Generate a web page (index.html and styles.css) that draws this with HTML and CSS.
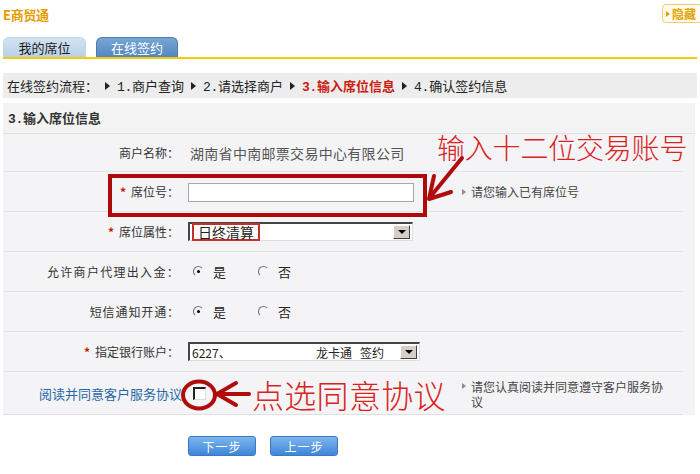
FILE: index.html
```html
<!DOCTYPE html>
<html lang="zh-CN">
<head>
<meta charset="utf-8">
<title>E商贸通 - 在线签约</title>
<link rel="stylesheet" href="styles.css">
</head>
<body>
<div class="page">
  <header class="top">
    <span class="brand">E商贸通</span>
    <a class="hide-btn"><span class="tri-gold"></span>隐藏</a>
  </header>

  <nav class="tabs">
    <span class="tab tab-light">我的席位</span>
    <span class="tab tab-active">在线签约</span>
  </nav>

  <div class="crumbs">
    <span>在线签约流程：</span>
    <span class="arr"></span><span><span class="num">1.</span>商户查询</span>
    <span class="arr"></span><span><span class="num">2.</span>请选择商户</span>
    <span class="arr"></span><span class="cur"><span class="num">3.</span>输入席位信息</span>
    <span class="arr"></span><span><span class="num">4.</span>确认签约信息</span>
  </div>

  <section class="panel">
    <h2 class="panel-title"><span class="num">3.</span>输入席位信息</h2>
    <div class="rows">
      <div class="row r-first">
        <div class="lab">商户名称：</div>
        <div class="val"><span class="company">湖南省中南邮票交易中心有限公司</span></div>
        <div class="hint"></div>
      </div>
      <div class="row">
        <div class="lab"><span class="star">*</span>席位号：</div>
        <div class="val"><span class="textbox"></span></div>
        <div class="hint"><span class="tri-gray"></span>请您输入已有席位号</div>
      </div>
      <div class="row">
        <div class="lab"><span class="star">*</span>席位属性：</div>
        <div class="val">
          <span class="select s-attr"><span class="sel-text boxed">日终清算</span><span class="drop"></span></span>
        </div>
        <div class="hint"></div>
      </div>
      <div class="row">
        <div class="lab wide">允许商户代理出入金：</div>
        <div class="val radios">
          <span class="radio on"></span><span class="opt">是</span>
          <span class="radio"></span><span class="opt">否</span>
        </div>
        <div class="hint"></div>
      </div>
      <div class="row">
        <div class="lab wide2">短信通知开通：</div>
        <div class="val radios">
          <span class="radio on"></span><span class="opt">是</span>
          <span class="radio"></span><span class="opt">否</span>
        </div>
        <div class="hint"></div>
      </div>
      <div class="row">
        <div class="lab"><span class="star">*</span>指定银行账户：</div>
        <div class="val">
          <span class="select s-bank"><span class="acct">6227、</span><span class="card">龙卡通&nbsp;&nbsp;&nbsp;签约</span><span class="drop"></span></span>
        </div>
        <div class="hint"></div>
      </div>
      <div class="row r-last">
        <div class="lab agree">阅读并同意客户服务协议</div>
        <div class="val"><span class="checkbox"></span></div>
        <div class="hint two"><span class="tri-gray"></span><span>请您认真阅读并同意遵守客户服务协议</span></div>
      </div>
    </div>
  </section>

  <div class="actions">
    <button class="btn">下一步</button>
    <button class="btn">上一步</button>
  </div>

  <div class="note note-1">输入十二位交易账号</div>
  <div class="note note-2">点选同意协议</div>
  <div class="mark-box"></div>
  <svg class="marks" width="700" height="474" viewBox="0 0 700 474">
    <g stroke="#b00c0c" stroke-width="4" fill="none" stroke-linecap="round" stroke-linejoin="round">
      <path d="M462 158 L431 196"/>
      <path d="M434 176 L429 199 L451 192"/>
      <ellipse cx="199" cy="395" rx="16" ry="13.5"/>
      <path d="M249 394 L221 394"/>
      <path d="M236 383 L217 394 L236 405"/>
    </g>
  </svg>
</div>
</body>
</html>
```
FILE: styles.css
```css
* { box-sizing: border-box; }
html, body { margin: 0; padding: 0; background: #fff; }
body {
  font-family: "Noto Sans CJK SC", "Liberation Sans", sans-serif;
  font-size: 12px;
  color: #333;
}
.page { position: relative; width: 700px; height: 474px; padding: 0 3px; overflow: hidden; }

/* header */
.top { height: 37px; display: flex; justify-content: space-between; align-items: flex-start; }
.brand { margin-top: 6px; font-weight: bold; font-size: 13px; color: #e49c00; line-height: 18px; letter-spacing: -0.3px; }
.hide-btn {
  margin-top: 4px; margin-right: -6px;
  display: flex; align-items: center; gap: 2px;
  height: 19px; padding: 0 6px 0 3px;
  border: 1px solid #eccd78; border-radius: 4px; background: #fffcef;
  color: #e3a200; font-weight: bold; font-size: 12px; line-height: 17px;
}
.tri-gold { width: 0; height: 0; border-left: 4px solid #e3a200; border-top: 3px solid transparent; border-bottom: 3px solid transparent; }

/* tabs */
.tabs { display: flex; gap: 10px; height: 22px; border-bottom: 2px solid #f1cb0c; }
.tab {
  height: 20px; display: flex; align-items: center; justify-content: center;
  border-radius: 6px 6px 0 0; font-size: 13px; line-height: 20px;
}
.tab-light { width: 83px; background: linear-gradient(#d3e2f1, #b9d0e7); color: #1d1d1d; border: 1px solid #c3d6ea; border-bottom: 0; }
.tab-active { width: 82px; background: linear-gradient(#78a6d4, #5287c0); color: #fff; border: 1px solid #4a7db4; border-bottom: 0; }

.num { font-family: "Liberation Mono", "DejaVu Sans Mono", monospace; letter-spacing: -0.3px; }

/* breadcrumb */
.crumbs {
  margin-top: 14px; height: 25px; background: #ededed;
  display: flex; align-items: center; padding-left: 4px;
  font-size: 13px; color: #222;
}
.arr { width: 0; height: 0; margin: 0 7px 0 7px; border-left: 5px solid #222; border-top: 4px solid transparent; border-bottom: 4px solid transparent; }
.crumbs .cur { color: #cc1a0f; font-weight: bold; }

/* panel */
.panel { margin-top: 5px; background: #f4f4f6; margin-right: 2px; }
.panel-title {
  margin: 0; height: 31px; line-height: 30px; padding-left: 5px;
  font-size: 13px; font-weight: bold; color: #333;
  background: #f3f3f3; border-bottom: 1px solid #e1e1e3;
}
.rows { margin-right: 12px; }
.row {
  display: grid; grid-template-columns: 179px 272px 1fr;
  height: 40px; align-items: center;
  border-bottom: 1px solid #e3e3e6;
}
.row.r-first { height: 38px; }
.row.r-last { height: 43px; border-bottom: 1px solid #e0e0e3; }
.lab { text-align: right; padding-right: 3px; font-size: 12px; color: #333; white-space: nowrap; }
.lab.wide { letter-spacing: 1.3px; padding-right: 2px; }
.lab.wide2 { letter-spacing: 0.9px; padding-right: 2px; }
.star { color: #c21b10; font-weight: bold; font-size: 12px; margin-right: 5px; }
.lab.agree { color: #2767a8; font-size: 13px; padding-right: 0; }
.val { padding-left: 6px; display: flex; align-items: center; }
.company { font-size: 14px; color: #555; letter-spacing: 0.3px; padding-left: 2px; }
.hint { padding-left: 8px; display: flex; align-items: center; gap: 4px; font-size: 12px; color: #444; }
.hint.two { align-items: flex-start; line-height: 15px; padding-top: 1px; }
.hint.two span:last-child { width: 192px; }
.hint.two .tri-gray { margin-top: 4px; }
.tri-gray { flex: none; width: 0; height: 0; border-left: 4px solid #8a8a8a; border-top: 3px solid transparent; border-bottom: 3px solid transparent; margin-right: 1px; }

/* controls */
.textbox { display: block; width: 226px; height: 19px; background: #fff; border: 1px solid #a6a6a6; margin-top: 2px; }
.select {
  position: relative; display: flex; align-items: center; height: 19px; background: #fff;
  border-top: 2px solid #444; border-left: 2px solid #444; border-right: 1px solid #ddd; border-bottom: 1px solid #ddd;
}
.s-attr { width: 225px; }
.s-bank { width: 232px; }
.sel-text { font-size: 14px; color: #222; line-height: 15px; }
.boxed { margin-left: 2px; padding: 0 4px; border: 2px solid #c9302a; height: 18px; line-height: 14px; margin-top: -1px; }
.drop {
  position: absolute; right: 2px; top: 1px; width: 17px; height: 14px;
  background: #d4d0c8; border: 1px solid; border-color: #fff #404040 #404040 #fff;
}
.drop::after {
  content: ""; position: absolute; left: 4px; top: 4px;
  border-top: 4px solid #000; border-left: 4px solid transparent; border-right: 4px solid transparent;
}
.acct { font-size: 12px; color: #222; padding-left: 2px; width: 126px; }
.card { font-size: 12px; color: #222; }

.radios { padding-left: 11px; }
.radio {
  position: relative; width: 11px; height: 11px; border-radius: 50%;
  border: 1px solid; border-color: #707070 #f4f4f6 #f4f4f6 #707070; background: transparent;
}
.radio.on::after { content: ""; position: absolute; left: 3px; top: 3px; width: 3px; height: 3px; border-radius: 50%; background: #000; }
.opt { font-size: 13px; color: #222; margin-left: 9px; margin-right: 32px; }

.checkbox {
  display: block; width: 13px; height: 13px; margin-left: 5px; margin-top: 1px; background: #fff;
  border-top: 2px solid #222; border-left: 2px solid #222; border-right: 1px solid #ddd; border-bottom: 1px solid #ddd;
}

/* buttons */
.actions { display: flex; gap: 14px; padding-left: 185px; margin-top: 21px; }
.btn {
  width: 68px; height: 20px; padding: 0;
  border: 1px solid #3b78c3; border-radius: 3px;
  background: linear-gradient(#7db5ee, #3f86d8);
  color: #fff; font-family: inherit; font-size: 12px; letter-spacing: 1px;
}

/* annotation overlay */
.note { position: absolute; color: #d8231e; font-weight: 300; white-space: nowrap; line-height: 1; }
.note-1 { left: 437px; top: 133px; font-size: 28px; letter-spacing: -0.2px; }
.note-2 { left: 252px; top: 378px; font-size: 32px; letter-spacing: 0.3px; }
.mark-box { position: absolute; left: 108px; top: 174px; width: 319px; height: 43px; border: 4px solid #ae0a0a; }
.marks { position: absolute; left: 0; top: 0; pointer-events: none; }
```
